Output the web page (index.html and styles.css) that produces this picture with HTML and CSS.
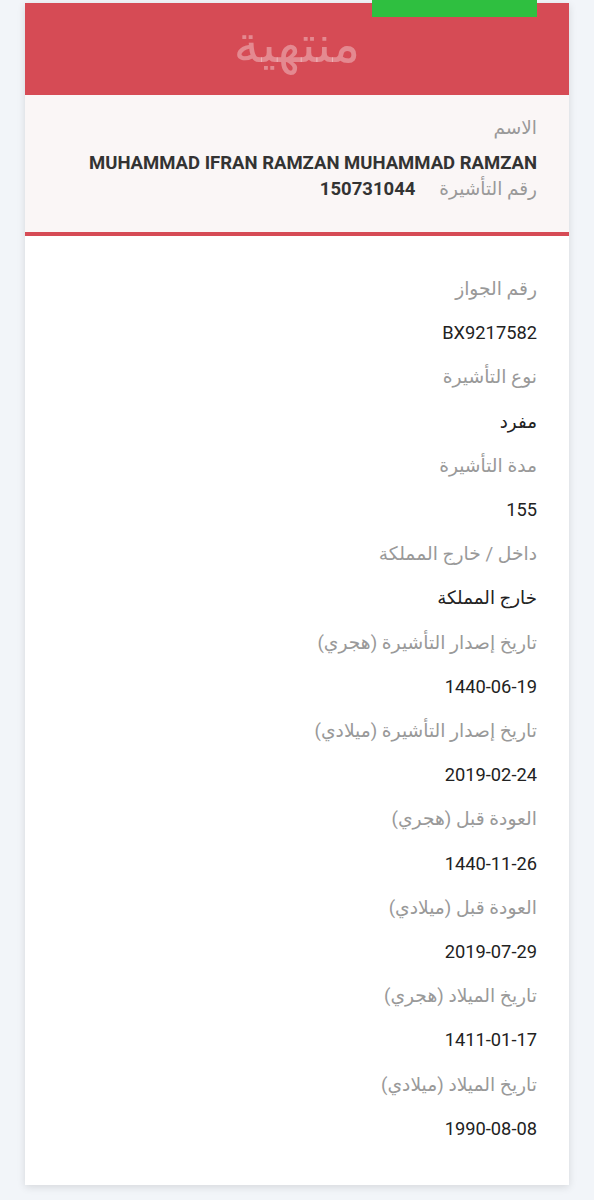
FILE: index.html
```html
<!DOCTYPE html>
<html lang="ar" dir="rtl">

<head>
  <meta charset="UTF-8">
  <meta name="viewport" content="width=device-width, initial-scale=1.0">
  <title>visa</title>
  <link rel="stylesheet" href="styles.css">
</head>

<body>
  <article class="visa-card">
    <span class="tab"></span>
    <header class="status">
      <h1>منتهية</h1>
    </header>

    <section class="holder">
      <p class="label">الاسم</p>
      <p class="name">MUHAMMAD IFRAN RAMZAN MUHAMMAD RAMZAN</p>
      <p class="visa-no">
        <span class="label">رقم التأشيرة</span>
        <b>150731044</b>
      </p>
    </section>

    <dl class="fields">
      <dt>رقم الجواز</dt>
      <dd>BX9217582</dd>
      <dt>نوع التأشيرة</dt>
      <dd>مفرد</dd>
      <dt>مدة التأشيرة</dt>
      <dd>155</dd>
      <dt>داخل / خارج المملكة</dt>
      <dd>خارج المملكة</dd>
      <dt>تاريخ إصدار التأشيرة (هجري)</dt>
      <dd>1440-06-19</dd>
      <dt>تاريخ إصدار التأشيرة (ميلادي)</dt>
      <dd>2019-02-24</dd>
      <dt>العودة قبل (هجري)</dt>
      <dd>1440-11-26</dd>
      <dt>العودة قبل (ميلادي)</dt>
      <dd>2019-07-29</dd>
      <dt>تاريخ الميلاد (هجري)</dt>
      <dd>1411-01-17</dd>
      <dt>تاريخ الميلاد (ميلادي)</dt>
      <dd>1990-08-08</dd>
    </dl>
  </article>
</body>

</html>
```

FILE: styles.css
```css
body {
  margin: 0;
  padding: 3px 0 20px;
  background: #f2f5f9;
  font-family: Roboto, "DejaVu Sans", sans-serif;
}

.visa-card {
  position: relative;
  margin: 0 25px;
  background: #fff;
  box-shadow: 0 2px 8px rgba(0, 0, 0, 0.12);
}

/* green action tab sitting over the top edge */
.tab {
  position: absolute;
  top: -20px;
  right: 32px;
  width: 165px;
  height: 34px;
  background: #2fbf40;
}

.status {
  height: 92px;
  background: #d64b55;
  text-align: center;
}

.status h1 {
  margin: 0;
  padding-top: 10px;
  font-size: 52px;
  font-weight: normal;
  line-height: 64px;
  color: rgba(255, 255, 255, 0.35);
}

.holder {
  padding: 18px 32px 31px;
  background: #faf6f6;
  border-bottom: 4px solid #d64b55;
}

.holder p {
  margin: 0;
}

.label {
  font-size: 18.5px;
  line-height: 30px;
  color: #999;
}

.holder .name {
  margin-top: 5px;
  font-size: 18.5px;
  font-weight: bold;
  line-height: 30px;
  color: #333;
}

.visa-no,
.visa-no .label {
  line-height: 22px;
}

.visa-no b {
  margin-right: 20px;
  font-size: 18.5px;
  color: #333;
}

.fields {
  margin: 0;
  padding: 31px 32px 34px;
}

.fields dt,
.fields dd {
  margin: 0;
  line-height: 44.2px;
}

.fields dt {
  font-size: 18.7px;
  color: #999;
}

.fields dd {
  font-size: 18.3px;
  color: #222;
}
```
